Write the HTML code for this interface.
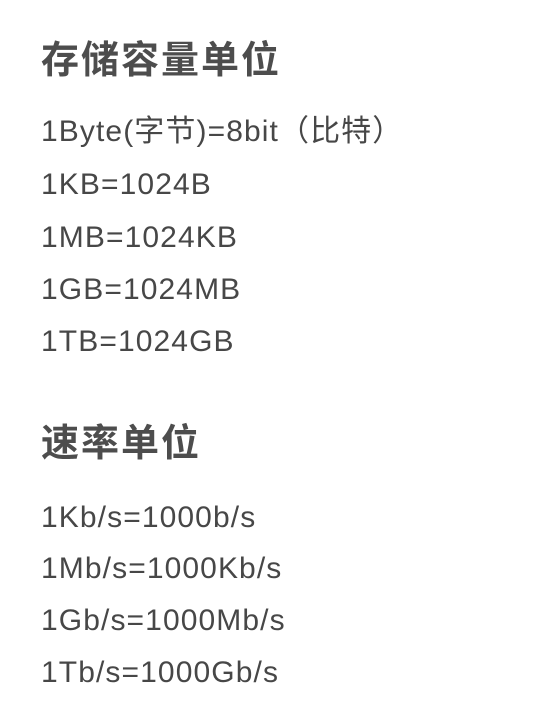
<!DOCTYPE html>
<html><head><meta charset="utf-8"><style>
body{margin:0;width:536px;height:712px;background:#fff;position:relative;font-family:"Liberation Sans","Noto Sans CJK SC",sans-serif;color:#4a4a4a}
div{position:absolute;left:41px;white-space:nowrap}
.h{font-size:38px;font-weight:bold;letter-spacing:2px;color:#4d4d4d;line-height:44px}
.t{font-size:30px;letter-spacing:1.1px;line-height:32px;color:#474747}
</style></head><body>
<div class="h" style="top:39px">存储容量单位</div>
<div class="t" style="top:116px">1Byte(字节)=8bit（比特）</div>
<div class="t" style="top:169px">1KB=1024B</div>
<div class="t" style="top:222px">1MB=1024KB</div>
<div class="t" style="top:274px">1GB=1024MB</div>
<div class="t" style="top:326px">1TB=1024GB</div>
<div class="h" style="top:422px">速率单位</div>
<div class="t" style="top:502px">1Kb/s=1000b/s</div>
<div class="t" style="top:553px">1Mb/s=1000Kb/s</div>
<div class="t" style="top:605px">1Gb/s=1000Mb/s</div>
<div class="t" style="top:657px">1Tb/s=1000Gb/s</div>
</body></html>
